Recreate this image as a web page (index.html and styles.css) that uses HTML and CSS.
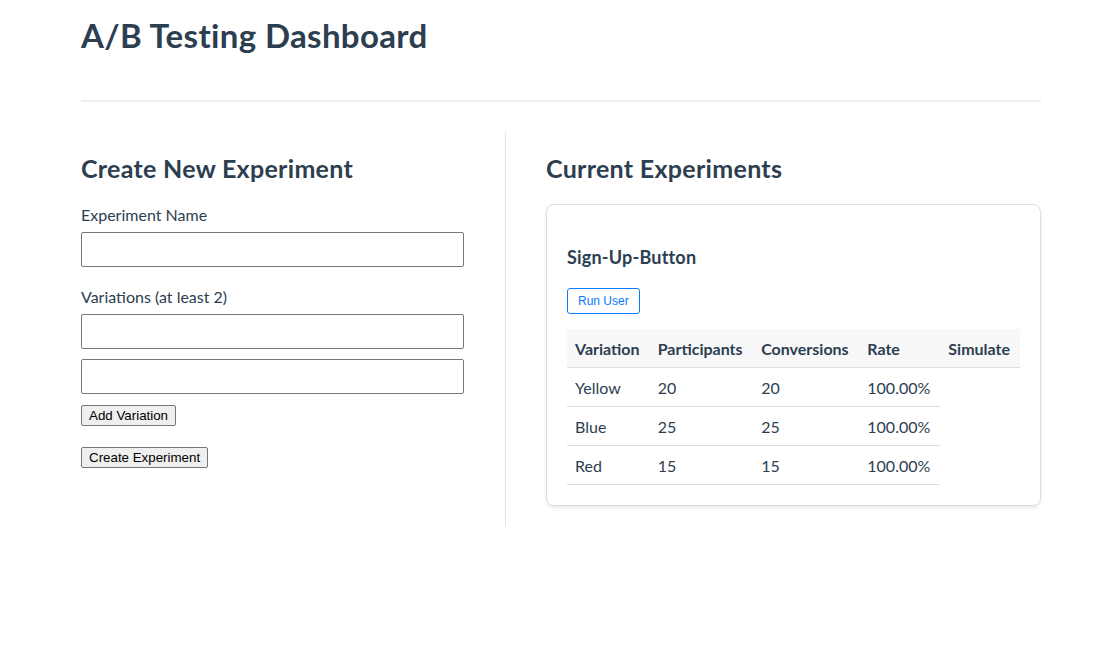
FILE: index.html
```html
<!DOCTYPE html>
<html>
<head>
<meta charset="utf-8">
<link rel="stylesheet" href="styles.css">
</head>
<body>
<div class="app">
  <header class="top">
    <h1 class="title">A/B Testing Dashboard</h1>
  </header>
  <hr class="rule">
  <main class="columns">
    <section class="create">
      <h2 class="section-title">Create New Experiment</h2>
      <form class="form">
        <label class="label">Experiment Name</label>
        <input class="field" type="text">
        <label class="label label-gap">Variations (at least 2)</label>
        <input class="field" type="text">
        <input class="field field-gap" type="text">
        <div class="btn-row"><button type="button" class="native-btn">Add Variation</button></div>
        <div class="btn-row btn-row-gap"><button type="button" class="native-btn">Create Experiment</button></div>
      </form>
    </section>
    <section class="current">
      <h2 class="section-title">Current Experiments</h2>
      <div class="card">
        <h3 class="card-title">Sign-Up-Button</h3>
        <button type="button" class="run-btn">Run User</button>
        <table class="results">
          <thead>
            <tr><th>Variation</th><th>Participants</th><th>Conversions</th><th>Rate</th><th>Simulate</th></tr>
          </thead>
          <tbody>
            <tr><td>Yellow</td><td>20</td><td>20</td><td>100.00%</td></tr>
            <tr><td>Blue</td><td>25</td><td>25</td><td>100.00%</td></tr>
            <tr><td>Red</td><td>15</td><td>15</td><td>100.00%</td></tr>
          </tbody>
        </table>
      </div>
    </section>
  </main>
</div>
</body>
</html>
```
FILE: styles.css
```css
html, body {
  margin: 0;
  padding: 0;
  background: #ffffff;
}
body {
  font-family: "Lato", "Noto Sans", sans-serif;
  color: #2c3e50;
}
.app {
  width: 960px;
  margin-left: 81px;
}
.top {
  height: 69px;
}
.title {
  margin: 0;
  padding-top: 15px;
  font-size: 33px;
  line-height: 40px;
  font-weight: 700;
  letter-spacing: 0.35px;
  color: #2c3e50;
}
.rule {
  border: 0;
  border-top: 2px solid #eeeeee;
  margin: 31px 0 30px 0;
}
.columns {
  display: flex;
  align-items: stretch;
}
.create {
  width: 383px;
  padding-right: 41px;
  border-right: 1px solid #e3e3e3;
  padding-bottom: 58px;
}
.current {
  flex: 1;
  padding-left: 40px;
}
.section-title {
  margin: 21px 0 0 0;
  font-size: 25px;
  line-height: 30px;
  font-weight: 700;
  letter-spacing: 0.3px;
  color: #2c3e50;
}
.form {
  display: flex;
  flex-direction: column;
  margin-top: 22px;
}
.label {
  font-size: 16px;
  line-height: 20px;
  font-weight: 400;
  color: #2c3e50;
  margin-bottom: 7px;
}
.label-gap {
  margin-top: 20px;
}
.field {
  box-sizing: border-box;
  width: 383px;
  height: 35px;
  margin: 0;
  border: 1px solid #767676;
  border-radius: 2px;
  background: #fff;
}
.field-gap {
  margin-top: 10px;
}
.btn-row {
  display: flex;
  margin-top: 11px;
}
.btn-row-gap {
  margin-top: 21px;
}
.native-btn {
  font-family: "Liberation Sans", Arial, sans-serif;
  font-size: 13.333px;
  line-height: 15px;
  color: #000;
  background: #efefef;
  border: 1px solid #767676;
  border-radius: 2px;
  padding: 1px 7px;
  height: 21px;
}
.card {
  margin-top: 21px;
  border: 1px solid #dddddd;
  border-radius: 8px;
  box-shadow: 0 2px 4px rgba(0, 0, 0, 0.08);
  padding: 20px;
}
.card-title {
  margin: 20px 0 0 0;
  font-size: 18px;
  line-height: 24px;
  font-weight: 700;
  letter-spacing: 0.2px;
  color: #2c3e50;
}
.run-btn {
  margin-top: 19px;
  font-family: "Liberation Sans", Arial, sans-serif;
  font-size: 12px;
  color: #0a7aff;
  background: #fff;
  border: 1px solid #0a7aff;
  border-radius: 3px;
  height: 26px;
  padding: 0 10px;
}
.results {
  margin-top: 15px;
  border-collapse: collapse;
  width: 453px;
}
.results th {
  background: #f8f8f8;
  text-align: left;
  font-size: 16px;
  font-weight: 700;
  padding: 0 8px;
  height: 38px;
  border-bottom: 1px solid #dddddd;
  white-space: nowrap;
}
.results td {
  font-size: 16px;
  font-weight: 400;
  padding: 0 8px;
  height: 38px;
  border-bottom: 1px solid #dddddd;
}
```
